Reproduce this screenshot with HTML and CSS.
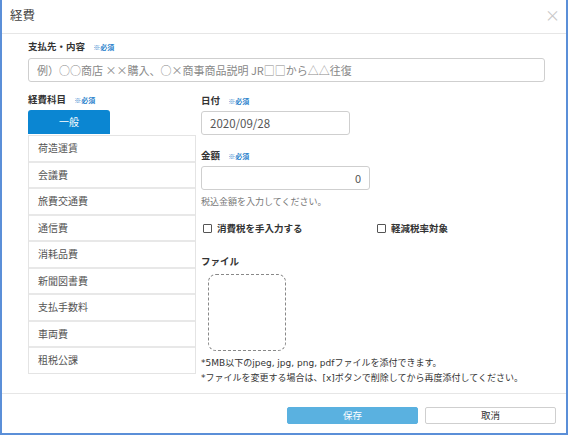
FILE: index.html
```html
<!DOCTYPE html>
<html lang="ja">
<head>
    <meta charset="UTF-8">
    <meta name="viewport" content="width=device-width, initial-scale=1.0">
    <title>経費</title>
    <link rel="stylesheet" href="styles.css">
</head>
<body>
    <div class="dialog">
        <header class="dialog-header">
            <span class="dialog-title">経費</span>
            <span class="dialog-close">&times;</span>
        </header>

        <section class="dialog-body">
            <div class="field">
                <label class="field-label">支払先・内容 <span class="required">※必須</span></label>
                <input type="text" class="text-input wide-input" placeholder="例）○○商店 ××購入、○×商事商品説明 JR□□から△△往復">
            </div>

            <div class="columns">
                <div class="left-col">
                    <label class="field-label">経費科目 <span class="required">※必須</span></label>
                    <div class="tab">一般</div>
                    <ul class="account-list">
                        <li>荷造運賃</li>
                        <li>会議費</li>
                        <li>旅費交通費</li>
                        <li>通信費</li>
                        <li>消耗品費</li>
                        <li>新聞図書費</li>
                        <li>支払手数料</li>
                        <li>車両費</li>
                        <li>租税公課</li>
                    </ul>
                </div>

                <div class="right-col">
                    <label class="field-label">日付 <span class="required">※必須</span></label>
                    <input type="text" class="text-input date-input" value="2020/09/28">

                    <label class="field-label amount-label">金額 <span class="required">※必須</span></label>
                    <input type="text" class="text-input amount-input" value="0">
                    <p class="hint">税込金額を入力してください。</p>

                    <div class="checks">
                        <label class="check"><span class="box"></span>消費税を手入力する</label>
                        <label class="check"><span class="box"></span>軽減税率対象</label>
                    </div>

                    <label class="field-label file-label">ファイル</label>
                    <div class="dropzone"></div>
                    <p class="note">*5MB以下のjpeg, jpg, png, pdfファイルを添付できます。</p>
                    <p class="note">*ファイルを変更する場合は、[x]ボタンで削除してから再度添付してください。</p>
                </div>
            </div>
        </section>

        <footer class="dialog-footer">
            <button class="btn btn-save">保存</button>
            <button class="btn btn-cancel">取消</button>
        </footer>
    </div>
</body>
</html>
```

FILE: styles.css
```css
body {
    margin: 0;
    padding: 0;
    background: #fff;
    font-family: "Noto Sans CJK JP", "DejaVu Sans", sans-serif;
    color: #333;
}

.dialog {
    box-sizing: border-box;
    width: 568px;
    height: 435px;
    border: 2px solid #5b8fd8;
    border-top: none;
    display: flex;
    flex-direction: column;
    background: #fff;
}

.dialog-header {
    height: 34px;
    border-bottom: 1px solid #e6e6e6;
    display: flex;
    justify-content: space-between;
    align-items: center;
    padding: 0 6px 4px 8px;
    box-sizing: border-box;
}

.dialog-title {
    font-size: 12.5px;
    color: #444;
}

.dialog-close {
    font-size: 15px;
    color: #c8c8c8;
    line-height: 1;
}

.dialog-body {
    flex: 1;
    padding: 5px 0 0 26px;
}

.field-label {
    display: block;
    font-size: 9.5px;
    font-weight: bold;
    color: #333;
    line-height: 14px;
}

.required {
    font-size: 7px;
    color: #2a82cc;
    margin-left: 6px;
}

.text-input {
    box-sizing: border-box;
    height: 24px;
    border: 1px solid #cfcfcf;
    border-radius: 3px;
    font-family: inherit;
    font-size: 11px;
    color: #555;
    padding: 0 8px;
    outline: none;
}

.text-input::placeholder {
    color: #888;
}

.wide-input {
    width: 517px;
    margin-top: 4px;
}

.columns {
    display: flex;
    gap: 5px;
    margin-top: 10px;
}

.left-col {
    width: 168px;
}

.tab {
    width: 82px;
    height: 24px;
    margin-top: 3px;
    background: #0b86d2;
    color: #fff;
    font-size: 10px;
    text-align: center;
    line-height: 24px;
    border-radius: 3px 3px 0 0;
}

.account-list {
    list-style: none;
    margin: 1px 0 0;
    padding: 0;
    border: 1px solid #e4e4e4;
    border-top: none;
}

.account-list li {
    height: 24.5px;
    line-height: 24px;
    padding-left: 9px;
    font-size: 10px;
    color: #555;
    border-top: 2px solid #e8e8e8;
}

.account-list li:first-child {
    border-top: 1px solid #e4e4e4;
}

.right-col {
    flex: 1;
    padding-top: 1px;
}

.date-input {
    width: 149px;
    margin-top: 3px;
    font-size: 11.5px;
}

.amount-label {
    margin-top: 13px;
}

.amount-input {
    width: 169px;
    margin-top: 3px;
    text-align: right;
}

.hint {
    margin: 5px 0 0;
    font-size: 9px;
    color: #777;
    line-height: 14px;
}

.checks {
    display: flex;
    margin-top: 12px;
    padding-left: 2px;
}

.check {
    display: flex;
    align-items: center;
    font-size: 9.5px;
    font-weight: bold;
    color: #333;
    line-height: 14px;
}

.check:first-child {
    width: 174px;
}

.box {
    width: 7px;
    height: 7px;
    border: 1px solid #555;
    border-radius: 1px;
    margin-right: 5px;
}

.file-label {
    margin-top: 19px;
}

.dropzone {
    width: 76px;
    height: 75px;
    margin: 6px 0 0 7px;
    border: 1px dashed #888;
    border-radius: 8px;
}

.note {
    margin: 6px 0 0;
    font-family: "DejaVu Sans", "Noto Sans CJK JP", sans-serif;
    font-size: 9px;
    color: #333;
    line-height: 13px;
}

.note + .note {
    margin-top: 2px;
}

.dialog-footer {
    height: 40px;
    border-top: 1px solid #e6e6e6;
    display: flex;
    justify-content: flex-end;
    align-items: flex-start;
    gap: 7px;
    padding: 13px 10px 0 0;
    box-sizing: border-box;
}

.btn {
    width: 131px;
    height: 17px;
    font-family: inherit;
    font-size: 9.5px;
    border-radius: 2px;
    padding: 0;
    line-height: 15px;
}

.btn-save {
    background: #5ab1e0;
    border: 1px solid #5ab1e0;
    color: #fff;
}

.btn-cancel {
    background: #fff;
    border: 1px solid #cfcfcf;
    color: #333;
}
```
